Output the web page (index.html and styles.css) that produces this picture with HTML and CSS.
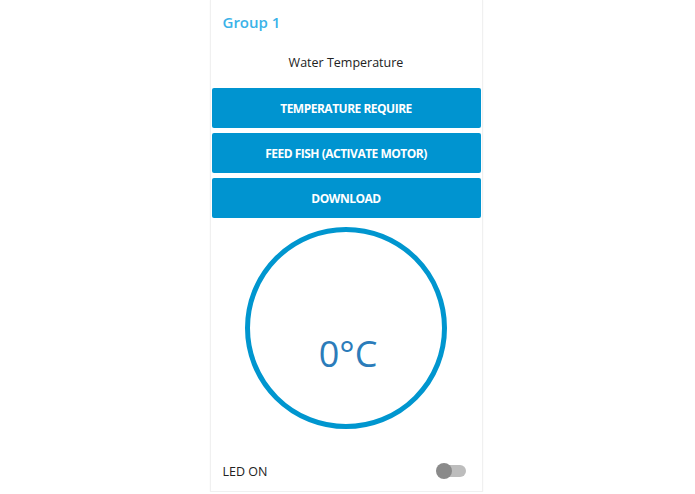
FILE: index.html
```html
<!DOCTYPE html>
<html>
<head>
<meta charset="utf-8">
<link rel="stylesheet" href="styles.css">
</head>
<body>
<div class="card">
  <div class="card-title">Group 1</div>
  <div class="label">Water Temperature</div>
  <div class="buttons">
    <button class="btn">TEMPERATURE REQUIRE</button>
    <button class="btn">FEED FISH (ACTIVATE MOTOR)</button>
    <button class="btn">DOWNLOAD</button>
  </div>
  <div class="gauge-wrap">
    <div class="gauge"><span class="gauge-value">0°C</span></div>
  </div>
  <div class="switch-row">
    <span class="switch-label">LED ON</span>
    <span class="switch"><span class="knob"></span></span>
  </div>
</div>
</body>
</html>
```

FILE: styles.css
```css
html, body {
  margin: 0;
  padding: 0;
  background: #ffffff;
}
body {
  font-family: "Open Sans", "Liberation Sans", sans-serif;
  display: flex;
  justify-content: center;
}
.card {
  width: 269px;
  height: 491px;
  margin-right: 3px;
  border: 1px solid #f0f0f0;
  border-top: none;
  box-shadow: 0 0 2px rgba(0,0,0,0.04);
  padding: 0 1px;
  display: flex;
  flex-direction: column;
}
.card-title {
  height: 44px;
  line-height: 44px;
  padding-left: 11px;
  font-size: 15px;
  font-weight: 600;
  color: #3ab2e8;
}
.label {
  height: 38px;
  line-height: 38px;
  text-align: center;
  font-size: 12.5px;
  color: #222222;
}
.buttons {
  margin-top: 6px;
  display: flex;
  flex-direction: column;
  gap: 5px;
}
.btn {
  height: 40px;
  border: none;
  border-radius: 2px;
  background: #0094d0;
  color: #ffffff;
  font-family: "Open Sans", "Liberation Sans", sans-serif;
  font-weight: 700;
  font-size: 12px;
  letter-spacing: -0.5px;
  padding: 0;
  width: 100%;
}
.gauge-wrap {
  display: flex;
  justify-content: center;
  padding-top: 9px;
}
.gauge {
  width: 192px;
  height: 192px;
  border: 5px solid #0096cf;
  border-radius: 50%;
  display: flex;
  justify-content: center;
  align-items: center;
}
.gauge-value {
  font-size: 36px;
  color: #2b7cba;
  margin-top: 50px;
  margin-left: 4px;
}
.switch-row {
  margin-top: 27px;
  display: flex;
  align-items: center;
  justify-content: space-between;
  padding: 0 15px 0 11px;
  height: 30px;
}
.switch-label {
  font-size: 12.5px;
  color: #222222;
}
.switch {
  position: relative;
  width: 28px;
  height: 12px;
  border-radius: 6px;
  background: #bdbdbd;
}
.knob {
  position: absolute;
  left: -2px;
  top: -2px;
  width: 16px;
  height: 16px;
  border-radius: 50%;
  background: #8a8a8a;
}
```
